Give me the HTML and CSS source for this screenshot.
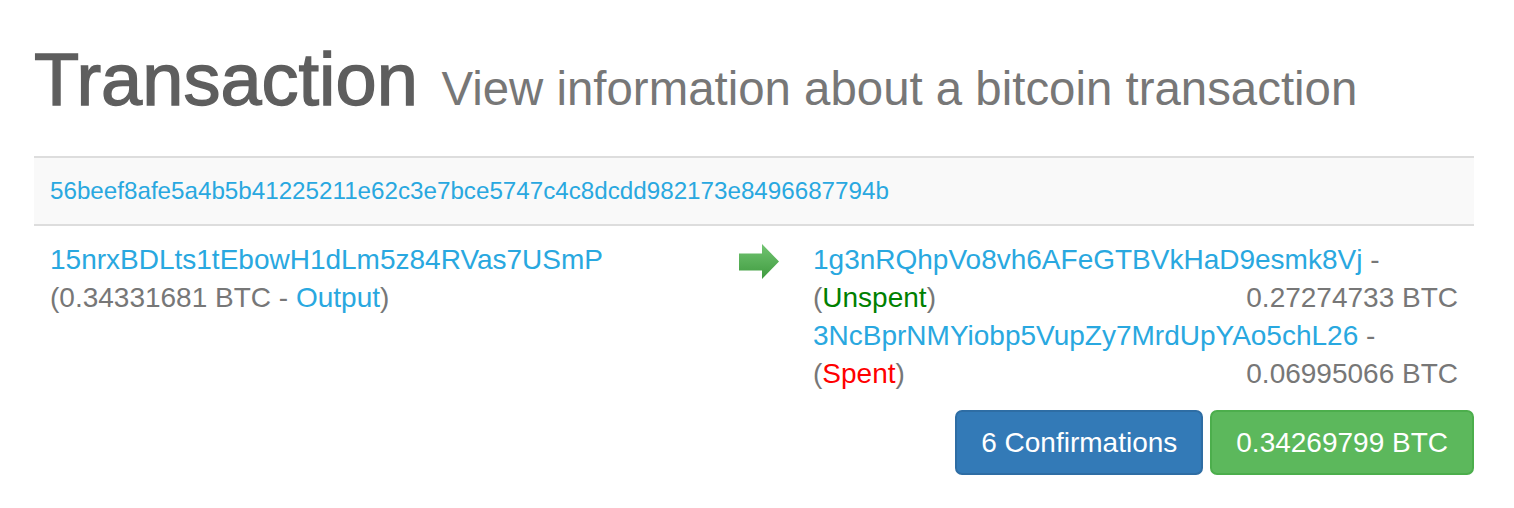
FILE: index.html
```html
<!DOCTYPE html>
<html>
<head>
<meta charset="utf-8">
<title>Transaction</title>
<link rel="stylesheet" href="styles.css">
</head>
<body>
<div class="container">
  <h1 class="page-title"><span class="title-text">Transaction</span> <small class="subtitle">View information about a bitcoin transaction</small></h1>
  <div class="tx">
    <div class="tx-hash"><a href="#">56beef8afe5a4b5b41225211e62c3e7bce5747c4c8dcdd982173e8496687794b</a></div>
    <div class="tx-io">
      <div class="inputs">
        <div class="line"><a href="#">15nrxBDLts1tEbowH1dLm5z84RVas7USmP</a></div>
        <div class="line muted">(0.34331681 BTC - <a href="#">Output</a>)</div>
      </div>
      <div class="arrow-cell">
        <svg class="arrow" width="40" height="35" viewBox="0 0 40 35">
          <defs>
            <linearGradient id="ag" x1="0" y1="0" x2="0" y2="1">
              <stop offset="0" stop-color="#72c472"/>
              <stop offset="1" stop-color="#3f9b3f"/>
            </linearGradient>
          </defs>
          <polygon points="0,9.5 23,9.5 23,0 40,17.5 23,35 23,26.5 0,26.5" fill="url(#ag)"/>
        </svg>
      </div>
      <div class="outputs">
        <div class="line"><a href="#">1g3nRQhpVo8vh6AFeGTBVkHaD9esmk8Vj</a> <span class="muted">-</span></div>
        <div class="line split"><span class="muted">(<span class="unspent">Unspent</span>)</span><span class="muted">0.27274733 BTC</span></div>
        <div class="line"><a href="#">3NcBprNMYiobp5VupZy7MrdUpYAo5chL26</a> <span class="muted">-</span></div>
        <div class="line split"><span class="muted">(<span class="spent">Spent</span>)</span><span class="muted">0.06995066 BTC</span></div>
      </div>
    </div>
  </div>
  <div class="actions">
    <span class="btn btn-primary">6 Confirmations</span>
    <span class="btn btn-success">0.34269799 BTC</span>
  </div>
</div>
</body>
</html>
```
FILE: styles.css
```css
html, body {
  margin: 0;
  padding: 0;
  background: #fff;
}
body {
  font-family: "Liberation Sans", Arial, Helvetica, sans-serif;
  color: #777;
}
a {
  color: #29a8e0;
  text-decoration: none;
}
.container {
  width: 1440px;
  padding: 0 40px 0 34px;
}
.page-title {
  margin: 39px 0 0 0;
  font-size: 74px;
  line-height: 81px;
  font-weight: normal;
  color: #5e5e5e;
}
.title-text {
  -webkit-text-stroke: 1.4px #5e5e5e;
  letter-spacing: 0;
}
.subtitle {
  font-size: 47.4px;
  color: #777;
  margin-left: 3px;
}
.tx {
  margin-top: 27px;
  border-top: 2px solid #ddd;
}
.tx-hash {
  background: #f9f9f9;
  padding: 16px;
  font-size: 24.2px;
  line-height: 34px;
}
.tx-io {
  border-top: 2px solid #ddd;
  display: grid;
  grid-template-columns: 689px 74px 1fr;
  font-size: 28px;
  line-height: 38px;
}
.inputs, .outputs, .arrow-cell {
  padding: 15px 16px 14px 16px;
}
.arrow-cell {
  padding-top: 18px;
}
.arrow {
  display: block;
}
.line {
  white-space: nowrap;
}
.split {
  display: flex;
  justify-content: space-between;
}
.muted {
  color: #777;
}
.unspent {
  color: #008000;
}
.spent {
  color: #ff0000;
}
.actions {
  display: flex;
  justify-content: flex-end;
  gap: 7px;
  margin-top: 3px;
}
.btn {
  display: inline-block;
  padding: 12px 24px;
  font-size: 28px;
  line-height: 37px;
  border: 2px solid transparent;
  border-radius: 7px;
  color: #fff;
}
.btn-primary {
  background: #337ab7;
  border-color: #2e6da4;
}
.btn-success {
  background: #5cb85c;
  border-color: #4cae4c;
}
```
